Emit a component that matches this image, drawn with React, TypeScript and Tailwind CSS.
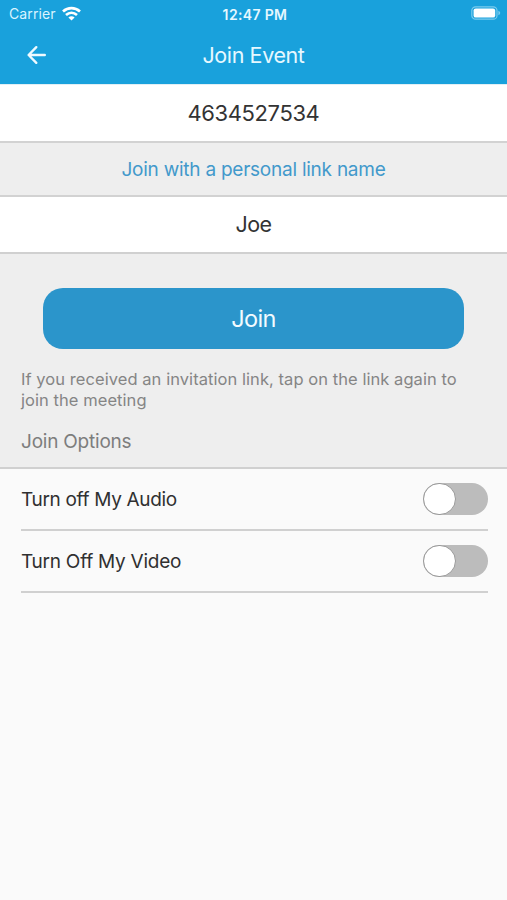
import React, { useState } from "react";
import { clsx } from "clsx";

interface ToggleRowProps {
  label: string;
  labelClassName?: string;
  checked: boolean;
  onChange: (checked: boolean) => void;
}

function ToggleRow({ label, labelClassName, checked, onChange }: ToggleRowProps) {
  return (
    <div className="flex h-[62px] items-center justify-between border-b-2 border-[#d0d0d0]">
      <span className={clsx("pt-[2px] text-[19px] text-[#303030]", labelClassName)}>{label}</span>
      <button
        type="button"
        role="switch"
        aria-checked={checked}
        aria-label={label}
        onClick={() => onChange(!checked)}
        className={clsx(
          "flex h-8 w-[65px] rounded-full",
          checked ? "justify-end bg-[#2b95cb]" : "justify-start bg-[#bcbcbc]"
        )}
      >
        <span className="h-8 w-[33px] rounded-full border border-[#999] bg-white" />
      </button>
    </div>
  );
}

function StatusBar() {
  return (
    <div className="grid h-7 grid-cols-3 items-center pb-[2px] pl-[9px] pr-[6px]">
      <div className="flex items-center gap-[6px]">
        <span className="text-[14px] tracking-[0.1px] text-[#d9f4ff]">Carrier</span>
        <svg width="19" height="15" viewBox="0 0 19 15" fill="none" stroke="white" strokeWidth="2.7">
          <path d="M1 5.4C6 .9 13 .9 18 5.4" />
          <path d="M4 8.9C7.3 6 11.7 6 15 8.9" />
          <path d="M6.4 11.4C8.3 9.9 10.7 9.9 12.6 11.4L9.5 14.6Z" fill="white" stroke="none" />
        </svg>
      </div>
      <span className="whitespace-nowrap pt-[2px] text-center text-[14px] font-semibold tracking-[0.35px] text-[#e6f8ff]">
        12:47 PM
      </span>
      <svg className="justify-self-end" width="30" height="14" viewBox="0 0 30 14">
        <rect x=".8" y=".8" width="25.2" height="12.4" rx="3.8" fill="none" stroke="#7bcbed" strokeWidth="1.2" />
        <rect x="2.6" y="2.4" width="21.6" height="9.2" rx="2.2" fill="white" />
        <path d="M27.4 4.8c2.4.8 2.4 3.6 0 4.4z" fill="#7bcbed" />
      </svg>
    </div>
  );
}

export default function App() {
  const [audioOff, setAudioOff] = useState(false);
  const [videoOff, setVideoOff] = useState(false);

  return (
    <div className="flex h-[900px] w-[507px] flex-col overflow-hidden bg-[#fafafa] font-['Inter',sans-serif]">
      <header className="h-[84px] bg-[#19a1dc]">
        <StatusBar />
        <div className="grid h-[54px] grid-cols-[60px_1fr_60px] items-center">
          <button type="button" aria-label="Back" className="pl-[26px]">
            <svg
              width="21"
              height="20"
              viewBox="0 0 21 20"
              fill="none"
              stroke="#effaff"
              strokeWidth="2.4"
              strokeLinecap="round"
              strokeLinejoin="round"
            >
              <path d="M10.3 2.2 2.6 10l7.7 7.8M2.8 10h16" />
            </svg>
          </button>
          <h1 className="text-center text-[21.5px] tracking-[-0.4px] text-[#e6f8ff]">Join Event</h1>
        </div>
      </header>

      <div className="flex h-[57px] items-center justify-center border-t border-[#e1eff5] bg-white text-[22px] tracking-[-0.4px] text-[#333]">
        4634527534
      </div>
      <button
        type="button"
        className="h-[56px] border-y-2 border-[#d2d2d2] bg-[#eee] pt-[2px] text-[19px] tracking-[-0.24px] text-[#4299cb]"
      >
        Join with a personal link name
      </button>
      <div className="flex h-[55px] items-center justify-center bg-white text-[21.5px] tracking-[-0.6px] text-[#333]">
        Joe
      </div>

      <section className="h-[217px] border-y-2 border-[#d0d0d0] bg-[#eee] px-[21px] pt-[34px]">
        <button
          type="button"
          className="ml-[22px] block h-[61px] w-[421px] rounded-[20px] bg-[#2b95cb] text-[23.5px] tracking-[-0.6px] text-[#f2fbff]"
        >
          Join
        </button>
        <p className="mt-5 text-[16.5px] leading-[20.5px] tracking-[0.06px] text-[#858585]">
          If you received an invitation link, tap on the link again to
          <br />
          join the meeting
        </p>
        <h2 className="mt-5 text-[19px] leading-6 tracking-[-0.22px] text-[#7d7d7d]">Join Options</h2>
      </section>

      <section className="pl-[21px] pr-[19px]">
        <ToggleRow
          label="Turn off My Audio"
          labelClassName="tracking-[-0.33px]"
          checked={audioOff}
          onChange={setAudioOff}
        />
        <ToggleRow
          label="Turn Off My Video"
          labelClassName="tracking-[-0.25px]"
          checked={videoOff}
          onChange={setVideoOff}
        />
      </section>
    </div>
  );
}
